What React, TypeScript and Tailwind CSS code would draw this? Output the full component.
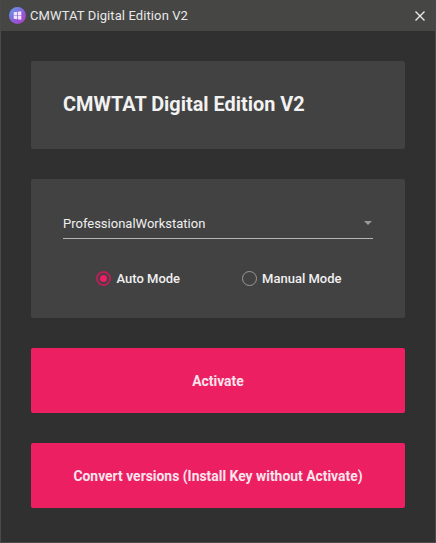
const Logo = () => (
  <svg width="17" height="17" viewBox="0 0 16 16">
    <defs>
      <linearGradient id="logo" x1="0" y1="0" x2="1" y2="1">
        <stop offset="0" stopColor="#58a8ec" />
        <stop offset="0.5" stopColor="#8a5fdc" />
        <stop offset="1" stopColor="#b53ac2" />
      </linearGradient>
    </defs>
    <circle cx="8" cy="8" r="8" fill="url(#logo)" />
    <path d="M4.4 5 7.6 4.5V7.7H4.4ZM8.3 4.4 11.6 3.9V7.7H8.3ZM4.4 8.3H7.6V11.5L4.4 11ZM8.3 8.3H11.6V12.1L8.3 11.6Z" fill="#efe6fa" />
  </svg>
);

const Radio = ({ label, checked }: { label: string; checked?: boolean }) => (
  <label className="flex items-center gap-[5px]">
    {checked ? (
      <span className="flex h-[15px] w-[15px] items-center justify-center rounded-full border-2 border-[#b81f57]">
        <span className="h-[7px] w-[7px] rounded-full bg-[#ed1e64]" />
      </span>
    ) : (
      <span className="h-[15px] w-[15px] rounded-full border-[1.5px] border-[#9a9a9a]" />
    )}
    <span className="text-[13px] font-medium text-[#f0f0f0]">{label}</span>
  </label>
);

export default function App() {
  return (
    <div className="flex h-[543px] w-[436px] flex-col overflow-hidden border-x border-b border-[#4a4a4a] bg-[#303030] font-['Roboto',sans-serif]">
      <div className="flex h-[31px] shrink-0 items-center bg-[#464644] pl-[8px] pr-[10px]">
        <Logo />
        <span className="ml-[4px] text-[13px] tracking-[0.1px] text-[#e8e8e8]">CMWTAT Digital Edition V2</span>
        <svg className="ml-auto" width="10" height="10" viewBox="0 0 10 10">
          <path d="M0.5 0.5 9.5 9.5M9.5 0.5 0.5 9.5" stroke="#efefef" strokeWidth="1.3" />
        </svg>
      </div>

      <div className="flex flex-col gap-[30px] px-[30px] pt-[30px]">
        <div className="flex h-[88px] items-center rounded-[2px] bg-[#424242] px-[32px]">
          <h1 className="text-[19.9px] font-bold text-[#f2f2f2]">CMWTAT Digital Edition V2</h1>
        </div>

        <div className="flex h-[139px] flex-col rounded-[2px] bg-[#424242] px-[32px] pt-[28px]">
          <div className="flex h-[32px] items-center justify-between border-b border-[#b4b4b4] pt-[3px] pr-[1px]">
            <span className="text-[13px] text-[#f0f0f0]">ProfessionalWorkstation</span>
            <span className="mb-[3px] h-0 w-0 border-x-[4px] border-t-[4px] border-x-transparent border-t-[#9a9a9a]" />
          </div>
          <div className="mt-[30px] flex justify-center gap-[62px] pl-[2px]">
            <Radio label="Auto Mode" checked />
            <Radio label="Manual Mode" />
          </div>
        </div>

        <button className="h-[65px] rounded-[2px] bg-[#ec1f63] pt-[2px] text-[13.9px] font-bold text-[#fbe4ec]">Activate</button>
        <button className="h-[65px] rounded-[2px] bg-[#ec1f63] pt-[2px] text-[13.9px] font-bold text-[#fbe4ec]">
          Convert versions (Install Key without Activate)
        </button>
      </div>
    </div>
  );
}
